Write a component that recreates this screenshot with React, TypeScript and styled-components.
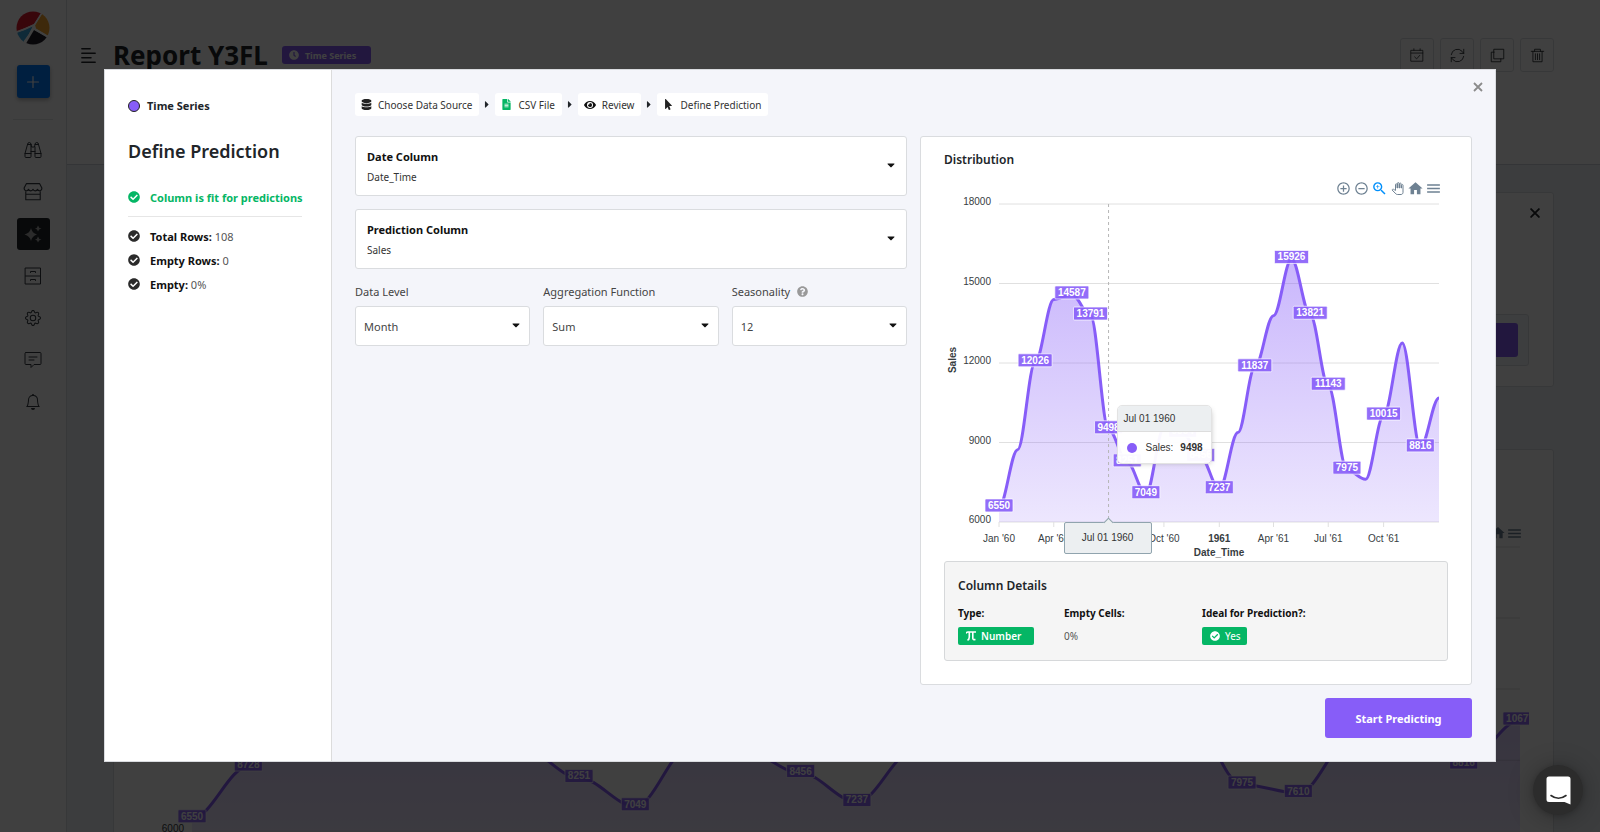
import React from "react";
import styled, { createGlobalStyle } from "styled-components";
import { FaCheckCircle, FaClock, FaDatabase, FaEye, FaFileAlt, FaMousePointer, FaQuestionCircle, FaCaretDown, FaCaretRight } from "react-icons/fa";
import { BsGear, BsBell } from "react-icons/bs";
import { MdAddCircleOutline, MdRemoveCircleOutline, MdZoomIn, MdHome, MdMenu } from "react-icons/md";

const purple = "#875df8";
const green = "#05b665";
const sans = '"Noto Sans", "Open Sans", sans-serif';
const chartFont = '"Liberation Sans", Arial, sans-serif';

const GlobalStyle = createGlobalStyle`
  *, *::before, *::after { box-sizing: border-box; }
  body { margin: 0; overflow: hidden; background: #f0f4f8; font-family: ${sans}; font-size: 11px; color: #212529; }
  button, select, input { font: inherit; color: inherit; }
  button { cursor: pointer; }
  svg { flex: none; }
`;

/* ---------- data ---------- */
const values = [
  6550, 8728, 12026, 14395, 14587, 13791, 9498, 8251, 7049, 9545, 9364, 8456,
  7237, 9374, 11837, 13784, 15926, 13821, 11143, 7975, 7610, 10015, 12759, 8816, 10677,
];
const series = values.map((value, i) => ({
  value,
  day: (Date.UTC(1960, i, 1) - Date.UTC(1960, 0, 1)) / 86400000,
}));
const lastDay = series[series.length - 1].day;

type Point = { x: number; y: number; value: number };

const project = (left: number, right: number, top: number, bottom: number): Point[] =>
  series.map(({ value, day }) => ({
    value,
    x: left + ((right - left) * day) / lastDay,
    y: bottom - ((bottom - top) * (value - 6000)) / 12000,
  }));

const smoothPath = (points: Point[]) =>
  points.reduce((d, p, i) => {
    if (i === 0) return `M${p.x},${p.y}`;
    const prev = points[i - 1];
    const reach = (p.x - prev.x) * 0.35;
    return `${d}C${prev.x + reach},${prev.y} ${p.x - reach},${p.y} ${p.x},${p.y}`;
  }, "");

/* ---------- page behind the dialog ---------- */
const Shell = styled.div`
  display: flex;
  height: 100vh;
  overflow: hidden;
`;
const Sidebar = styled.nav`
  width: 67px;
  flex: none;
  background: #fff;
  border-right: 1px solid #dcdfe3;
  display: flex;
  flex-direction: column;
  align-items: center;
  padding-top: 11px;
`;
const AddButton = styled.button`
  width: 33px;
  height: 33px;
  margin-top: 20px;
  border: 0;
  border-radius: 3px;
  background: #007bff;
  color: #fff;
  display: grid;
  place-items: center;
  box-shadow: 0 2px 4px rgba(0, 0, 0, 0.3);
`;
const SideRule = styled.hr`
  width: 40px;
  margin: 21px 0 14px;
  border: 0;
  border-top: 1px solid #e3e5e8;
`;
const SideLink = styled.a<{ $active?: boolean }>`
  width: 33px;
  height: 32px;
  margin-bottom: 10px;
  border-radius: 3px;
  display: grid;
  place-items: center;
  color: ${(p) => (p.$active ? "#aaa" : "#343a40")};
  background: ${(p) => (p.$active ? "#212529" : "transparent")};
`;
const Main = styled.main`
  flex: 1;
  min-width: 0;
`;
const Header = styled.header`
  height: 165px;
  padding: 38px 46px 0 14px;
  background: #fff;
  border-bottom: 1px solid #cfd4da;
  display: flex;
  align-items: flex-start;
`;
const HeaderTitle = styled.div`
  height: 34px;
  display: flex;
  align-items: center;
`;
const Title = styled.h1`
  margin: 0 14px 0 17px;
  font-size: 26px;
  line-height: 34px;
  font-weight: 700;
`;
const SeriesBadge = styled.span`
  height: 18px;
  padding: 0 15px 0 7px;
  border-radius: 3px;
  background: ${purple};
  color: #fff;
  font-size: 9px;
  font-weight: 700;
  display: flex;
  align-items: center;
  gap: 6px;
`;
const Tools = styled.div`
  margin-left: auto;
  display: flex;
  gap: 6px;
`;
const ToolButton = styled.button`
  width: 34px;
  height: 34px;
  border: 1px solid #dcdfe3;
  border-radius: 3px;
  background: #fff;
  display: grid;
  place-items: center;
  padding: 0;
`;
const Board = styled.div`
  padding: 27px 46px 0;
`;
const Panel = styled.section`
  border: 1px solid #dcdfe3;
  border-radius: 3px;
  background: #fff;
  margin-bottom: 62px;
`;
const ActionPanel = styled(Panel)`
  height: 195px;
  padding: 13px 11px 0 23px;
  display: flex;
  flex-direction: column;
  align-items: flex-end;
`;
const ActionBar = styled.div`
  align-self: stretch;
  margin: 94px 13px 0 0;
  padding: 8px 10px;
  border: 1px solid #dcdfe3;
  border-radius: 3px;
  background: #f4f7f9;
  display: flex;
  justify-content: flex-end;
`;
const Action = styled.button`
  width: 120px;
  height: 34px;
  border: 0;
  border-radius: 3px;
  background: ${purple};
`;
const PlainButton = styled.button`
  border: 0;
  padding: 0;
  background: none;
  display: grid;
  place-items: center;
`;
const ChartPanel = styled(Panel)`
  padding: 75px 24px 0 23px;
`;
const PanelTools = styled.div`
  display: flex;
  justify-content: flex-end;
  height: 15px;
  padding-right: 6px;
  color: #6e8192;
`;

/* ---------- dialog ---------- */
const Backdrop = styled.div`
  position: fixed;
  inset: 0;
  padding: 69px 0;
  background: rgba(0, 0, 0, 0.75);
  overflow: hidden;
`;
const Dialog = styled.div`
  position: relative;
  width: 87%;
  margin: 0 auto;
  display: flex;
  background: #f4f5fa;
  border: 1px solid #d9dbdf;
`;
const Aside = styled.aside`
  width: 227px;
  flex: none;
  padding: 27px 23px;
  background: #fff;
  border-right: 1px solid #dcdcdc;
`;
const Kind = styled.div`
  display: flex;
  align-items: center;
  gap: 7px;
  line-height: 18px;
  font-weight: 700;
`;
const Dot = styled.span`
  width: 12px;
  height: 12px;
  border: 1px solid #222;
  border-radius: 50%;
  background: ${purple};
`;
const Heading = styled.h2`
  margin: 22px 0 20px;
  font-size: 18px;
  line-height: 28px;
  font-weight: 600;
`;
const Fact = styled.div<{ $good?: boolean }>`
  display: flex;
  align-items: center;
  gap: 10px;
  height: 24px;
  white-space: nowrap;
  color: #555;
  svg { color: ${(p) => (p.$good ? green : "#2b2b2b")}; }
  strong { font-weight: 700; color: ${(p) => (p.$good ? green : "#111")}; }
`;
const Rule = styled.hr`
  margin: 7px 6px 7px 0;
  border: 0;
  border-top: 1px solid #e6e6e6;
`;
const Content = styled.div`
  flex: 1;
  min-width: 0;
  padding: 23px;
`;
const Close = styled(PlainButton)`
  position: absolute;
  top: 9px;
  right: 9px;
  width: 16px;
  height: 16px;
  color: #8b8b8b;
`;
const Crumbs = styled.ol`
  margin: 0 0 20px;
  padding: 0;
  list-style: none;
  display: flex;
`;
const Crumb = styled.li`
  display: flex;
  align-items: center;
  & + & > svg { width: 16px; }
`;
const CrumbLink = styled.a`
  height: 23px;
  padding: 0 7px 0 6px;
  border-radius: 3px;
  background: #fff;
  color: #333;
  font-size: 10px;
  text-decoration: none;
  display: flex;
  align-items: center;
  gap: 6px;
`;
const Columns = styled.div`
  display: grid;
  grid-template-columns: 1fr 1fr;
  gap: 13px;
`;
const Form = styled.form`
  display: flex;
  flex-direction: column;
  gap: 13px;
`;
const caretBox = `
  position: relative;
  border: 1px solid #dadcdf;
  border-radius: 3px;
  background: #fff;
  & > svg { position: absolute; top: 50%; margin-top: -7px; pointer-events: none; color: #111; }
`;
const PickCard = styled.div`
  ${caretBox}
  height: 60px;
  padding: 10px 11px;
  & > svg { right: 9px; }
  label { display: block; font-weight: 700; line-height: 20px; color: #111; }
`;
const CardSelect = styled.select`
  display: block;
  width: 100%;
  height: 19px;
  padding: 0;
  border: 0;
  appearance: none;
  background: transparent;
  font-size: 10px;
  color: #333;
`;
const Fields = styled.div`
  display: grid;
  grid-template-columns: repeat(3, 1fr);
  gap: 13px;
`;
const FieldLabel = styled.label`
  display: flex;
  align-items: center;
  gap: 7px;
  height: 18px;
  margin-bottom: 6px;
  color: #444;
  svg { color: #999; }
`;
const SelectBox = styled.div`
  ${caretBox}
  height: 40px;
  & > svg { right: 7px; }
`;
const BoxSelect = styled.select`
  width: 100%;
  height: 100%;
  padding: 0 8px;
  border: 0;
  appearance: none;
  background: transparent;
  color: #444;
`;
const Card = styled.section`
  padding: 13px 23px 23px;
  border: 1px solid #dadcdf;
  border-radius: 3px;
  background: #fff;
`;
const CardTitle = styled.h3`
  margin: 0;
  font-size: 12px;
  line-height: 20px;
  font-weight: 600;
`;
const Toolbar = styled.div`
  display: flex;
  justify-content: flex-end;
  align-items: center;
  height: 16px;
  margin: 10px 6px 1px 0;
  color: #6e8192;
  button { width: 18px; }
`;
const Plot = styled.div`
  position: relative;
  svg { display: block; width: 100%; }
`;
const Tooltip = styled.div`
  position: absolute;
  top: 208px;
  width: 95px;
  border: 1px solid #e3e3e3;
  border-radius: 5px;
  overflow: hidden;
  background: rgba(255, 255, 255, 0.96);
  box-shadow: 2px 2px 6px -4px #999;
  font-family: ${chartFont};
  font-size: 10px;
  color: #333;
`;
const TooltipTitle = styled.div`
  height: 26px;
  padding-left: 6px;
  line-height: 26px;
  background: #eceff1;
  border-bottom: 1px solid #ddd;
`;
const TooltipRow = styled.div`
  height: 31px;
  padding-left: 9px;
  display: flex;
  align-items: center;
  i { width: 10px; height: 10px; margin-right: 9px; border-radius: 50%; background: ${purple}; }
  b { margin-left: 7px; }
`;
const AxisTooltip = styled.div`
  position: absolute;
  top: 325px;
  width: 88px;
  height: 32px;
  margin-left: -45px;
  border: 1px solid #90a4ae;
  border-radius: 2px;
  background: #eceff1;
  font-family: ${chartFont};
  font-size: 10px;
  line-height: 30px;
  text-align: center;
  color: #333;
  &::before {
    content: "";
    position: absolute;
    left: 50%;
    top: -4px;
    width: 7px;
    height: 7px;
    margin-left: -3px;
    background: #eceff1;
    border: solid #90a4ae;
    border-width: 1px 0 0 1px;
    transform: rotate(45deg);
  }
`;
const Details = styled.div`
  margin-top: 2px;
  padding: 14px 13px 12px;
  border: 1px solid #d6d8da;
  border-radius: 3px;
  background: #f5f5f5;
`;
const DetailList = styled.dl`
  margin: 9px 0 0;
  display: grid;
  grid-template-columns: 106px 138px 1fr;
  font-size: 10px;
  dt { height: 16px; line-height: 16px; font-weight: 700; color: #111; }
  dd { height: 18px; margin: 6px 0 3px; display: flex; align-items: center; color: #555; }
`;
const Tag = styled.span<{ $bold?: boolean }>`
  height: 18px;
  padding: 0 ${(p) => (p.$bold ? 13 : 6)}px 0 8px;
  border-radius: 2px;
  background: ${green};
  color: #fff;
  font-weight: ${(p) => (p.$bold ? 600 : 400)};
  display: flex;
  align-items: center;
  gap: 5px;
`;
const Footer = styled.footer`
  display: flex;
  justify-content: flex-end;
  margin-top: 13px;
`;
const Primary = styled.button`
  width: 147px;
  height: 40px;
  border: 0;
  border-radius: 3px;
  background: ${purple};
  color: #fff;
  font-weight: 700;
`;
const Chat = styled.button`
  position: fixed;
  right: 17px;
  bottom: 17px;
  width: 50px;
  height: 50px;
  border: 0;
  border-radius: 50%;
  background: #2c2c2c;
  display: grid;
  place-items: center;
  box-shadow: 0 1px 6px rgba(0, 0, 0, 0.2), 0 2px 26px rgba(0, 0, 0, 0.3);
`;

/* ---------- drawings ---------- */
const Logo = () => (
  <svg width="34" height="34" viewBox="0 0 34 34" aria-label="Logo">
    <clipPath id="disc"><circle cx="17" cy="17" r="16.5" /></clipPath>
    <g clipPath="url(#disc)">
      <path d="M0 0H27L18 13Q9 17 0 21Z" fill="#e01b2f" />
      <path d="M27 1L36 4V27L20 17.500L19 14Z" fill="#f7a42c" />
      <path d="M0 22Q10 19 18 14L8.500 31L2 32Z" fill="#3fa7dd" />
      <path d="M18 19L32 27L24 36H8Z" fill="#231f2b" />
      <path d="M27 0L18 14.500Q14 24 8 31M-1 21.500Q10 18 18 14L18.500 18L34 27" fill="none" stroke="#fff" strokeWidth="1.600" />
    </g>
  </svg>
);
type IconProps = { children: React.ReactNode; size?: number };
const Line = ({ children, size = 18 }: IconProps) => (
  <svg width={size} height={size} viewBox="0 0 18 18" fill="none" stroke="currentColor" strokeLinecap="round" strokeLinejoin="round">{children}</svg>
);
const BinocularsIcon = () => (
  <Line><path d="M3.500 3.500Q3.500 1.500 5.250 1.500Q7 1.500 7 3.500L7.500 6H10.500L11 3.500Q11 1.500 12.750 1.500Q14.500 1.500 14.500 3.500L17 12.500V15.500Q17 16.500 16 16.500H12Q11 16.500 11 15.500V6M7 3.500V15.500Q7 16.500 6 16.500H2Q1 16.500 1 15.500V12.500L3.500 3.500M3.500 3.500H7M11 3.500H14.500M1 12.500H7M11 12.500H17M7 10.500H11" /></Line>
);
const SparkleIcon = () => (
  <svg width="18" height="18" viewBox="0 0 18 18" fill="currentColor">
    <path d="M7 3Q8 8 13 9.500Q8 11 7 16Q6 11 0.500 9.500Q6 8 7 3ZM14 0.500Q14.500 3 17.500 3.500Q14.500 4 14 6.500Q13.500 4 11 3.500Q13.500 3 14 0.500ZM14 11.500Q14.500 14 17.500 14.500Q14.500 15 14 17.500Q13.500 15 11 14.500Q13.500 14 14 11.500Z" />
  </svg>
);
const ShopIcon = () => (
  <Line size={20}><path d="M3 1.500H15L17 5.500C17 8.500 13.600 8.500 13 6.500C12.400 8.500 9.500 8.500 9 6.500C8.500 8.500 5.600 8.500 5 6.500C4.400 8.500 1 8.500 1 5.500ZM2.500 8.500V16H15.500V8.500M2.500 11H15.500" /></Line>
);
const CabinetIcon = () => (
  <Line><path d="M1.500 1H16.500V17H1.500ZM1.500 9H16.500M6.500 5.500V4.500H11.500V5.500M6.500 13.500V12.500H11.500V13.500" /></Line>
);
const ChatIcon = () => (
  <Line><path d="M2 1.500H16Q17 1.500 17 2.500V12.500Q17 13.500 16 13.500H10L7 16.500V13.500H2Q1 13.500 1 12.500V2.500Q1 1.500 2 1.500ZM5 6H13M5 9H10" /></Line>
);
const CalendarIcon = () => (
  <Line size={14}><path d="M1.500 3H16.500V17H1.500ZM1.500 6.500H16.500M5 1V3M13 1V3M6 11.500L8.500 14L12.500 9.500" /></Line>
);
const SyncIcon = () => (
  <Line size={15}><path d="M1.500 8A7.500 7.500 0 0 1 14.500 4L16.500 6.500M16.500 1.500V6.500H12M16.500 10A7.500 7.500 0 0 1 3.500 14L1.500 11.500M1.500 16.500V11.500H6" /></Line>
);
const CopyIcon = () => (
  <Line size={15}><path d="M5 1.500H16.500V13H5ZM5 5H1.500V16.500H13V13" /></Line>
);
const TrashIcon = () => (
  <Line size={15}><path d="M1.500 4H16.500M5.500 4V1.500H12.500V4M3.500 4V16.500H14.500V4M6.500 7V14M9 7V14M11.500 7V14" /></Line>
);
const CrossIcon = () => (
  <svg width="10" height="10" viewBox="0 0 10 10" fill="none" stroke="currentColor" strokeWidth="1.800"><path d="M1 1L9 9M9 1L1 9" /></svg>
);
const HandIcon = () => (
  <svg width="13" height="13" viewBox="-1 -1 26 26" fill="#fff" stroke="#6e8192" strokeWidth="2">
    <path d="M23 5.500V20c0 2.200-1.800 4-4 4h-7.300c-1.080 0-2.100-.43-2.850-1.190L1 14.830s1.260-1.230 1.300-1.250c.22-.19.49-.29.79-.29.22 0 .42.06.6.16.04.01 4.310 2.460 4.310 2.460V4c0-.83.67-1.500 1.500-1.500S11 3.170 11 4v7h1V1.500c0-.83.67-1.500 1.500-1.500S15 .67 15 1.500V11h1V2.500c0-.83.67-1.500 1.500-1.500s1.500.67 1.500 1.500V11h1V5.500c0-.83.67-1.500 1.500-1.500s1.500.67 1.500 1.500z" />
  </svg>
);

const ChartLabel = ({ x, y, value }: Point) => {
  const width = String(value).length * 6 + 4;
  return (
    <g>
      <rect x={x - width / 2} y={y - 8.5} width={width} height="13" rx="1" fill={purple} fillOpacity="0.9" stroke="#fff" strokeOpacity="0.7" />
      <text x={x} y={y + 1.5} textAnchor="middle" fill="#fff" fontWeight="700">{value}</text>
    </g>
  );
};

const SalesArea = ({ id, points, bottom }: { id: string; points: Point[]; bottom: number }) => {
  const d = smoothPath(points);
  return (
    <>
      <linearGradient id={id} x1="0" y1="0" x2="0" y2="1">
        <stop offset="0" stopColor={purple} stopOpacity="0.45" />
        <stop offset="1" stopColor={purple} stopOpacity="0.15" />
      </linearGradient>
      <path d={`${d}V${bottom}H${points[0].x}Z`} fill={`url(#${id})`} />
      <path d={d} fill="none" stroke={purple} strokeWidth="3" />
    </>
  );
};

const gridValues = [18000, 15000, 12000, 9000, 6000];
const hiddenLabels = [1, 3, 9, 13, 15, 20, 22, 24];
const monthTicks = [
  { index: 0, text: "Jan '60" }, { index: 3, text: "Apr '60" }, { index: 9, text: "Oct '60" },
  { index: 12, text: "1961" }, { index: 15, text: "Apr '61" }, { index: 18, text: "Jul '61" }, { index: 21, text: "Oct '61" },
];

const DistributionChart = () => {
  const left = 55, right = 495, top = 7, bottom = 325;
  const points = project(left, right, top, bottom);
  const hovered = points[6];
  return (
    <Plot>
      <svg viewBox="0 0 504 362" fontFamily={chartFont} fontSize="10" fill="#373d3f" role="img" aria-label="Sales by Date_Time">
        {gridValues.map((v, i) => {
          const y = top + ((bottom - top) * i) / 4;
          return (
            <g key={v}>
              <path d={`M${left} ${y}H${right}`} stroke="#e0e0e0" />
              <text x="47" y={y + 1} textAnchor="end">{v}</text>
            </g>
          );
        })}
        <clipPath id="plot"><rect x={left} y="0" width={right - left} height={bottom} /></clipPath>
        <g clipPath="url(#plot)"><SalesArea id="distribution" points={points} bottom={bottom} /></g>
        <path d={`M${hovered.x} ${top}V${bottom}`} stroke="#b6b6b6" strokeDasharray="3" />
        {points.map((p, i) => (hiddenLabels.includes(i) ? null : <ChartLabel key={i} {...p} />))}
        {monthTicks.map(({ index, text }) => (
          <g key={text}>
            <path d={`M${points[index].x} ${bottom}v5`} stroke="#e0e0e0" />
            <text x={points[index].x} y="345" textAnchor="middle" fontWeight={text === "1961" ? 700 : 400}>{text}</text>
          </g>
        ))}
        <text x="275" y="359" textAnchor="middle" fontWeight="700">Date_Time</text>
        <text transform="translate(12 163) rotate(-90)" textAnchor="middle" fontWeight="700">Sales</text>
      </svg>
      <Tooltip style={{ left: `calc(${(hovered.x / 504) * 100}% + 8px)` }}>
        <TooltipTitle>Jul 01 1960</TooltipTitle>
        <TooltipRow><i />Sales: <b>9498</b></TooltipRow>
      </Tooltip>
      <AxisTooltip style={{ left: `${(hovered.x / 504) * 100}%` }}>Jul 01 1960</AxisTooltip>
    </Plot>
  );
};

const ReportChart = () => {
  const left = 55, right = 1382, top = 7, bottom = 291;
  const points = project(left, right, top, bottom);
  return (
    <Plot>
      <svg viewBox="0 0 1391 310" fontFamily={chartFont} fontSize="10" fill="#373d3f" role="img" aria-label="Sales report">
        {gridValues.map((v, i) => {
          const y = top + ((bottom - top) * i) / 4;
          return (
            <g key={v}>
              <path d={`M${left} ${y}H${right}`} stroke="#e0e0e0" />
              <text x="47" y={y + 1} textAnchor="end">{v}</text>
            </g>
          );
        })}
        <SalesArea id="report" points={points} bottom={bottom} />
        {points.map((p, i) => <ChartLabel key={i} {...p} />)}
      </svg>
    </Plot>
  );
};

const crumbs = [
  { text: "Choose Data Source", icon: <FaDatabase size={11} color="#222" /> },
  { text: "CSV File", icon: <FaFileAlt size={11} color={green} /> },
  { text: "Review", icon: <FaEye size={12} color="#111" /> },
  { text: "Define Prediction", icon: <FaMousePointer size={11} color="#222" /> },
];
const fields = [
  { id: "level", label: "Data Level", value: "Month" },
  { id: "aggregation", label: "Aggregation Function", value: "Sum" },
  { id: "seasonality", label: "Seasonality", value: "12", help: true },
];
const facts = [["Total Rows:", "108"], ["Empty Rows:", "0"], ["Empty:", "0%"]];
const nav = [
  { name: "Explore", icon: <BinocularsIcon /> },
  { name: "Store", icon: <ShopIcon /> },
  { name: "Predictions", icon: <SparkleIcon />, active: true },
  { name: "Storage", icon: <CabinetIcon /> },
  { name: "Settings", icon: <BsGear size={16} /> },
  { name: "Messages", icon: <ChatIcon /> },
  { name: "Alerts", icon: <BsBell size={16} /> },
];
const tools = [
  { name: "Schedule", icon: <CalendarIcon /> },
  { name: "Refresh", icon: <SyncIcon /> },
  { name: "Duplicate", icon: <CopyIcon /> },
  { name: "Delete", icon: <TrashIcon /> },
];
const chartTools = [
  { name: "Zoom in", icon: <MdAddCircleOutline size={15} /> },
  { name: "Zoom out", icon: <MdRemoveCircleOutline size={15} /> },
  { name: "Selection zoom", icon: <MdZoomIn size={17} color="#008ffb" /> },
  { name: "Pan", icon: <HandIcon /> },
  { name: "Reset", icon: <MdHome size={17} /> },
  { name: "Menu", icon: <MdMenu size={17} /> },
];

export default function App() {
  return (
    <>
      <GlobalStyle />
      <Shell>
        <Sidebar>
          <Logo />
          <AddButton aria-label="Add"><Line size={14}><path d="M9 2V16M2 9H16" strokeWidth="1.500" /></Line></AddButton>
          <SideRule />
          {nav.map((n) => <SideLink key={n.name} href="#" aria-label={n.name} $active={n.active}>{n.icon}</SideLink>)}
        </Sidebar>
        <Main>
          <Header>
            <HeaderTitle>
              <Line size={15}><path d="M1 1H11M1 6.300H17M1 11.600H12M1 17H17" strokeWidth="1.800" /></Line>
              <Title>Report Y3FL</Title>
              <SeriesBadge><FaClock size={10} />Time Series</SeriesBadge>
            </HeaderTitle>
            <Tools>{tools.map((t) => <ToolButton key={t.name} aria-label={t.name}>{t.icon}</ToolButton>)}</Tools>
          </Header>
          <Board>
            <ActionPanel>
              <PlainButton aria-label="Dismiss"><Line size={14}><path d="M4 4L14 14M14 4L4 14" strokeWidth="2.400" /></Line></PlainButton>
              <ActionBar><Action aria-label="Run" /></ActionBar>
            </ActionPanel>
            <ChartPanel>
              <PanelTools><MdHome size={16} /><MdMenu size={17} /></PanelTools>
              <ReportChart />
            </ChartPanel>
          </Board>
        </Main>
      </Shell>
      <Backdrop>
        <Dialog role="dialog" aria-label="Define Prediction">
          <Aside>
            <Kind><Dot />Time Series</Kind>
            <Heading>Define Prediction</Heading>
            <Fact $good><FaCheckCircle size={12} /><strong>Column is fit for predictions</strong></Fact>
            <Rule />
            {facts.map(([name, value]) => (
              <Fact key={name}><FaCheckCircle size={12} /><span><strong>{name}</strong> {value}</span></Fact>
            ))}
          </Aside>
          <Content>
            <Crumbs>
              {crumbs.map((c, i) => (
                <Crumb key={c.text}>
                  {i > 0 && <FaCaretRight size={11} />}
                  <CrumbLink href="#">{c.icon}{c.text}</CrumbLink>
                </Crumb>
              ))}
            </Crumbs>
            <Columns>
              <Form>
                <PickCard>
                  <label htmlFor="date">Date Column</label>
                  <CardSelect id="date"><option>Date_Time</option></CardSelect>
                  <FaCaretDown size={12} />
                </PickCard>
                <PickCard>
                  <label htmlFor="prediction">Prediction Column</label>
                  <CardSelect id="prediction"><option>Sales</option></CardSelect>
                  <FaCaretDown size={12} />
                </PickCard>
                <Fields>
                  {fields.map((f) => (
                    <div key={f.id}>
                      <FieldLabel htmlFor={f.id}>{f.label}{f.help && <FaQuestionCircle size={11} />}</FieldLabel>
                      <SelectBox>
                        <BoxSelect id={f.id}><option>{f.value}</option></BoxSelect>
                        <FaCaretDown size={12} />
                      </SelectBox>
                    </div>
                  ))}
                </Fields>
              </Form>
              <Card>
                <CardTitle>Distribution</CardTitle>
                <Toolbar>{chartTools.map((t) => <PlainButton key={t.name} aria-label={t.name}>{t.icon}</PlainButton>)}</Toolbar>
                <DistributionChart />
                <Details>
                  <CardTitle>Column Details</CardTitle>
                  <DetailList>
                    <div><dt>Type:</dt><dd><Tag $bold>
                      <svg width="10" height="10" viewBox="0 0 10 10" fill="none" stroke="currentColor" strokeWidth="1.600"><path d="M0 2.500Q0.500 1 2 1H10M3.300 1V6Q3.300 8.500 1.500 9.200M6.800 1V7.500Q6.900 9 9.500 8.500" /></svg>
                      Number</Tag></dd></div>
                    <div><dt>Empty Cells:</dt><dd>0%</dd></div>
                    <div><dt>Ideal for Prediction?:</dt><dd><Tag><FaCheckCircle size={10} />Yes</Tag></dd></div>
                  </DetailList>
                </Details>
              </Card>
            </Columns>
            <Footer><Primary>Start Predicting</Primary></Footer>
          </Content>
          <Close aria-label="Close"><CrossIcon /></Close>
        </Dialog>
      </Backdrop>
      <Chat aria-label="Open chat">
        <svg width="25" height="29" viewBox="0 0 25 29" fill="none">
          <path d="M3 0.500H22Q24.500 0.500 24.500 3V28.500L18.500 26H3Q0.500 26 0.500 23.500V3Q0.500 0.500 3 0.500Z" fill="#fff" />
          <path d="M5 19.500Q12.500 25 20 19.500" stroke="#2c2c2c" strokeWidth="1.600" strokeLinecap="round" />
        </svg>
      </Chat>
    </>
  );
}
